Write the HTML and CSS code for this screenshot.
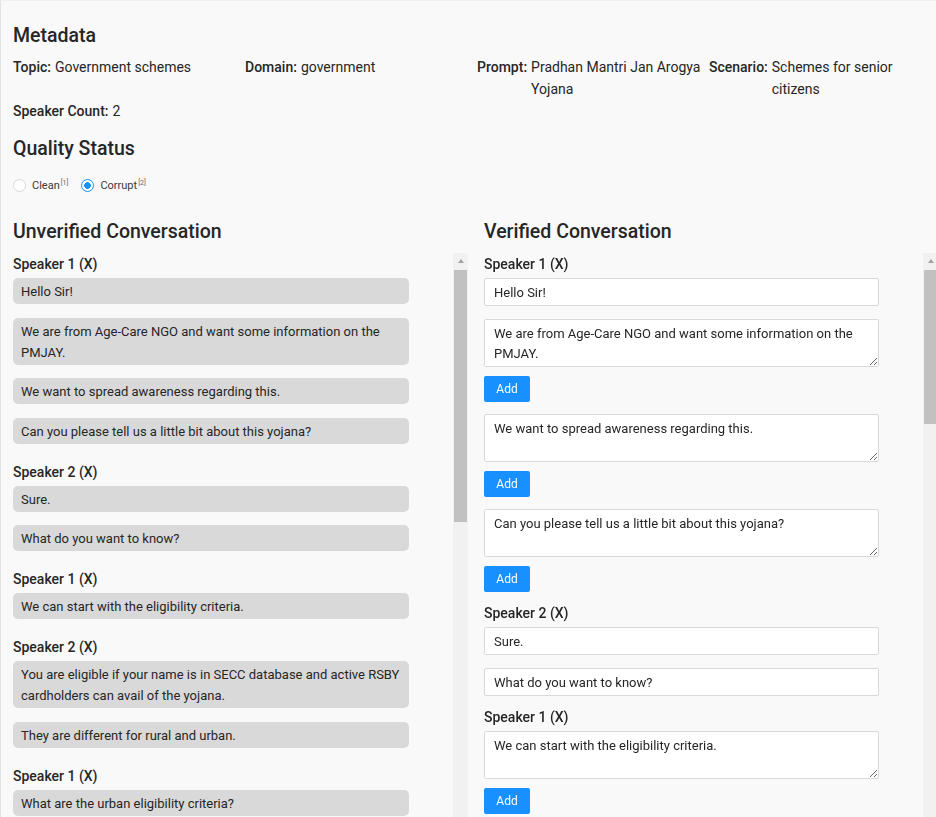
FILE: index.html
```html
<!DOCTYPE html>
<html lang="en">
<head>
<meta charset="utf-8">
<title>Conversation Review</title>
<link rel="stylesheet" href="styles.css">
</head>
<body>
<div class="page">
  <section class="meta">
    <h2 class="title">Metadata</h2>
    <div class="meta-grid">
      <div class="meta-item"><span class="meta-label">Topic:</span><span class="meta-value">Government schemes</span></div>
      <div class="meta-item"><span class="meta-label">Domain:</span><span class="meta-value">government</span></div>
      <div class="meta-item"><span class="meta-label">Prompt:</span><span class="meta-value">Pradhan Mantri Jan Arogya Yojana</span></div>
      <div class="meta-item"><span class="meta-label">Scenario:</span><span class="meta-value">Schemes for senior citizens</span></div>
      <div class="meta-item"><span class="meta-label">Speaker Count:</span><span class="meta-value">2</span></div>
    </div>
    <h2 class="title quality-title">Quality Status</h2>
    <div class="radios">
      <label class="radio"><input type="radio" name="quality" value="clean"><span>Clean<sup>[1]</sup></span></label>
      <label class="radio"><input type="radio" name="quality" value="corrupt" checked><span>Corrupt<sup>[2]</sup></span></label>
    </div>
  </section>

  <section class="conv">
    <div class="conv-col">
      <h2 class="title">Unverified Conversation</h2>
      <div class="scroll-wrap">
        <div class="scroll-body">
          <div class="ugroup">
            <div class="speaker">Speaker 1 (X)</div>
            <div class="bubble">Hello Sir!</div>
            <div class="bubble">We are from Age-Care NGO and want some information on the PMJAY.</div>
            <div class="bubble">We want to spread awareness regarding this.</div>
            <div class="bubble">Can you please tell us a little bit about this yojana?</div>
          </div>
          <div class="ugroup">
            <div class="speaker">Speaker 2 (X)</div>
            <div class="bubble">Sure.</div>
            <div class="bubble">What do you want to know?</div>
          </div>
          <div class="ugroup">
            <div class="speaker">Speaker 1 (X)</div>
            <div class="bubble">We can start with the eligibility criteria.</div>
          </div>
          <div class="ugroup">
            <div class="speaker">Speaker 2 (X)</div>
            <div class="bubble">You are eligible if your name is in SECC database and active RSBY cardholders can avail of the yojana.</div>
            <div class="bubble">They are different for rural and urban.</div>
          </div>
          <div class="ugroup">
            <div class="speaker">Speaker 1 (X)</div>
            <div class="bubble">What are the urban eligibility criteria?</div>
          </div>
          <div class="ugroup">
            <div class="speaker">Speaker 2 (X)</div>
            <div class="bubble">In urban areas, occupational categories like rag pickers, street vendors and domestic workers are eligible.</div>
          </div>
        </div>
        <div class="scrollbar">
          <span class="sb-up"></span>
          <span class="sb-thumb sb-thumb-left"></span>
        </div>
      </div>
    </div>

    <div class="conv-col">
      <h2 class="title">Verified Conversation</h2>
      <div class="scroll-wrap">
        <div class="scroll-body">
          <div class="vgroup">
            <div class="speaker">Speaker 1 (X)</div>
            <input class="field" type="text" value="Hello Sir!">
            <textarea class="field area">We are from Age-Care NGO and want some information on the PMJAY.</textarea>
            <button class="add" type="button">Add</button>
            <textarea class="field area">We want to spread awareness regarding this.</textarea>
            <button class="add" type="button">Add</button>
            <textarea class="field area">Can you please tell us a little bit about this yojana?</textarea>
            <button class="add" type="button">Add</button>
          </div>
          <div class="vgroup">
            <div class="speaker">Speaker 2 (X)</div>
            <input class="field" type="text" value="Sure.">
            <input class="field" type="text" value="What do you want to know?">
          </div>
          <div class="vgroup">
            <div class="speaker">Speaker 1 (X)</div>
            <textarea class="field area">We can start with the eligibility criteria.</textarea>
            <button class="add" type="button">Add</button>
          </div>
          <div class="vgroup">
            <div class="speaker">Speaker 2 (X)</div>
            <textarea class="field area">You are eligible if your name is in SECC database and active RSBY cardholders can avail of the yojana.</textarea>
            <button class="add" type="button">Add</button>
          </div>
        </div>
        <div class="scrollbar">
          <span class="sb-up"></span>
          <span class="sb-thumb sb-thumb-right"></span>
        </div>
      </div>
    </div>
  </section>
</div>
</body>
</html>
```
FILE: styles.css
```css
html, body {
  margin: 0;
  height: 100%;
  overflow: hidden;
}

body {
  background: #f9f9f9;
  color: #262626;
  font-family: Roboto, "Noto Sans", sans-serif;
  font-size: 13px;
  border-left: 1px solid #e3e3e3;
  border-top: 1px solid #f0f0f0;
  box-sizing: border-box;
}

.page {
  padding: 23px 0 0 12px;
}

.title {
  margin: 0 0 9px;
  font-size: 19.5px;
  line-height: 24px;
  font-weight: 500;
  color: #262626;
}

.meta-grid {
  display: grid;
  grid-template-columns: repeat(4, 232px);
  font-size: 14px;
  line-height: 22px;
  margin-top: -1px;
}

.meta-item {
  display: flex;
  gap: 4px;
}

.meta-label {
  flex: none;
  font-weight: 500;
}

.meta-value {
  flex: 1;
  min-width: 0;
}

.quality-title {
  margin-top: 15px;
  margin-bottom: 15px;
}

.radios {
  display: flex;
  align-items: center;
  gap: 13px;
  height: 18px;
  font-size: 11px;
  color: #3a3a3a;
}

.radio {
  display: flex;
  align-items: center;
  gap: 6px;
}

.radio input {
  appearance: none;
  -webkit-appearance: none;
  margin: 0;
  width: 13px;
  height: 13px;
  border: 1px solid #d9d9d9;
  border-radius: 50%;
  background: #fff;
}

.radio input:checked {
  border-color: #1890ff;
  background: radial-gradient(circle, #1890ff 0 3px, #fff 3.6px);
}

.radio sup {
  font-size: 7px;
  color: #666;
  vertical-align: 4px;
  margin-left: 1px;
}

.conv {
  display: grid;
  grid-template-columns: 455px 454px;
  column-gap: 16px;
  margin-top: 26px;
}

.scroll-wrap {
  display: flex;
  height: 600px;
}

.scroll-body {
  flex: 1;
  min-width: 0;
  overflow: hidden;
  padding-top: 1px;
}

.scrollbar {
  flex: 0 0 15px;
  display: flex;
  flex-direction: column;
  background: #f1f1f1;
}

.sb-up {
  flex: none;
  height: 15px;
  display: flex;
  align-items: center;
  justify-content: center;
}

.sb-up::before {
  content: "";
  width: 0;
  height: 0;
  border-left: 3.5px solid transparent;
  border-right: 3.5px solid transparent;
  border-bottom: 4px solid #a3a3a3;
}

.sb-thumb {
  flex: none;
  margin: 2px 1px 0 1px;
  background: #c1c1c1;
}

.sb-thumb-left {
  height: 252px;
}

.sb-thumb-right {
  height: 154px;
}

.speaker {
  margin: 0 0 3px;
  font-size: 14px;
  line-height: 21px;
  font-weight: 500;
  color: #262626;
}

.bubble {
  width: 90%;
  box-sizing: border-box;
  background: #d9d9d9;
  border-radius: 5px;
  padding: 3px 8px 2px;
  line-height: 21px;
  margin-bottom: 13.5px;
  color: #262626;
}

.ugroup > :last-child {
  margin-bottom: 18px;
}

.field {
  display: block;
  width: 90%;
  box-sizing: border-box;
  border: 1px solid #d9d9d9;
  border-radius: 2px;
  background: #fff;
  font-family: inherit;
  font-size: 13px;
  color: #262626;
  margin: 0 0 13px;
  outline: none;
}

input.field {
  height: 28px;
  padding: 0 9px;
}

.area {
  height: 48px;
  padding: 4px 9px;
  line-height: 20px;
  resize: vertical;
  margin-bottom: 9px;
}

.add {
  display: block;
  width: 46px;
  height: 26px;
  padding: 0;
  border: none;
  border-radius: 2px;
  background: #1890ff;
  color: #fff;
  font-family: inherit;
  font-size: 12px;
  margin: 0 0 12px;
}

.vgroup > :last-child {
  margin-bottom: 11px;
}
```
